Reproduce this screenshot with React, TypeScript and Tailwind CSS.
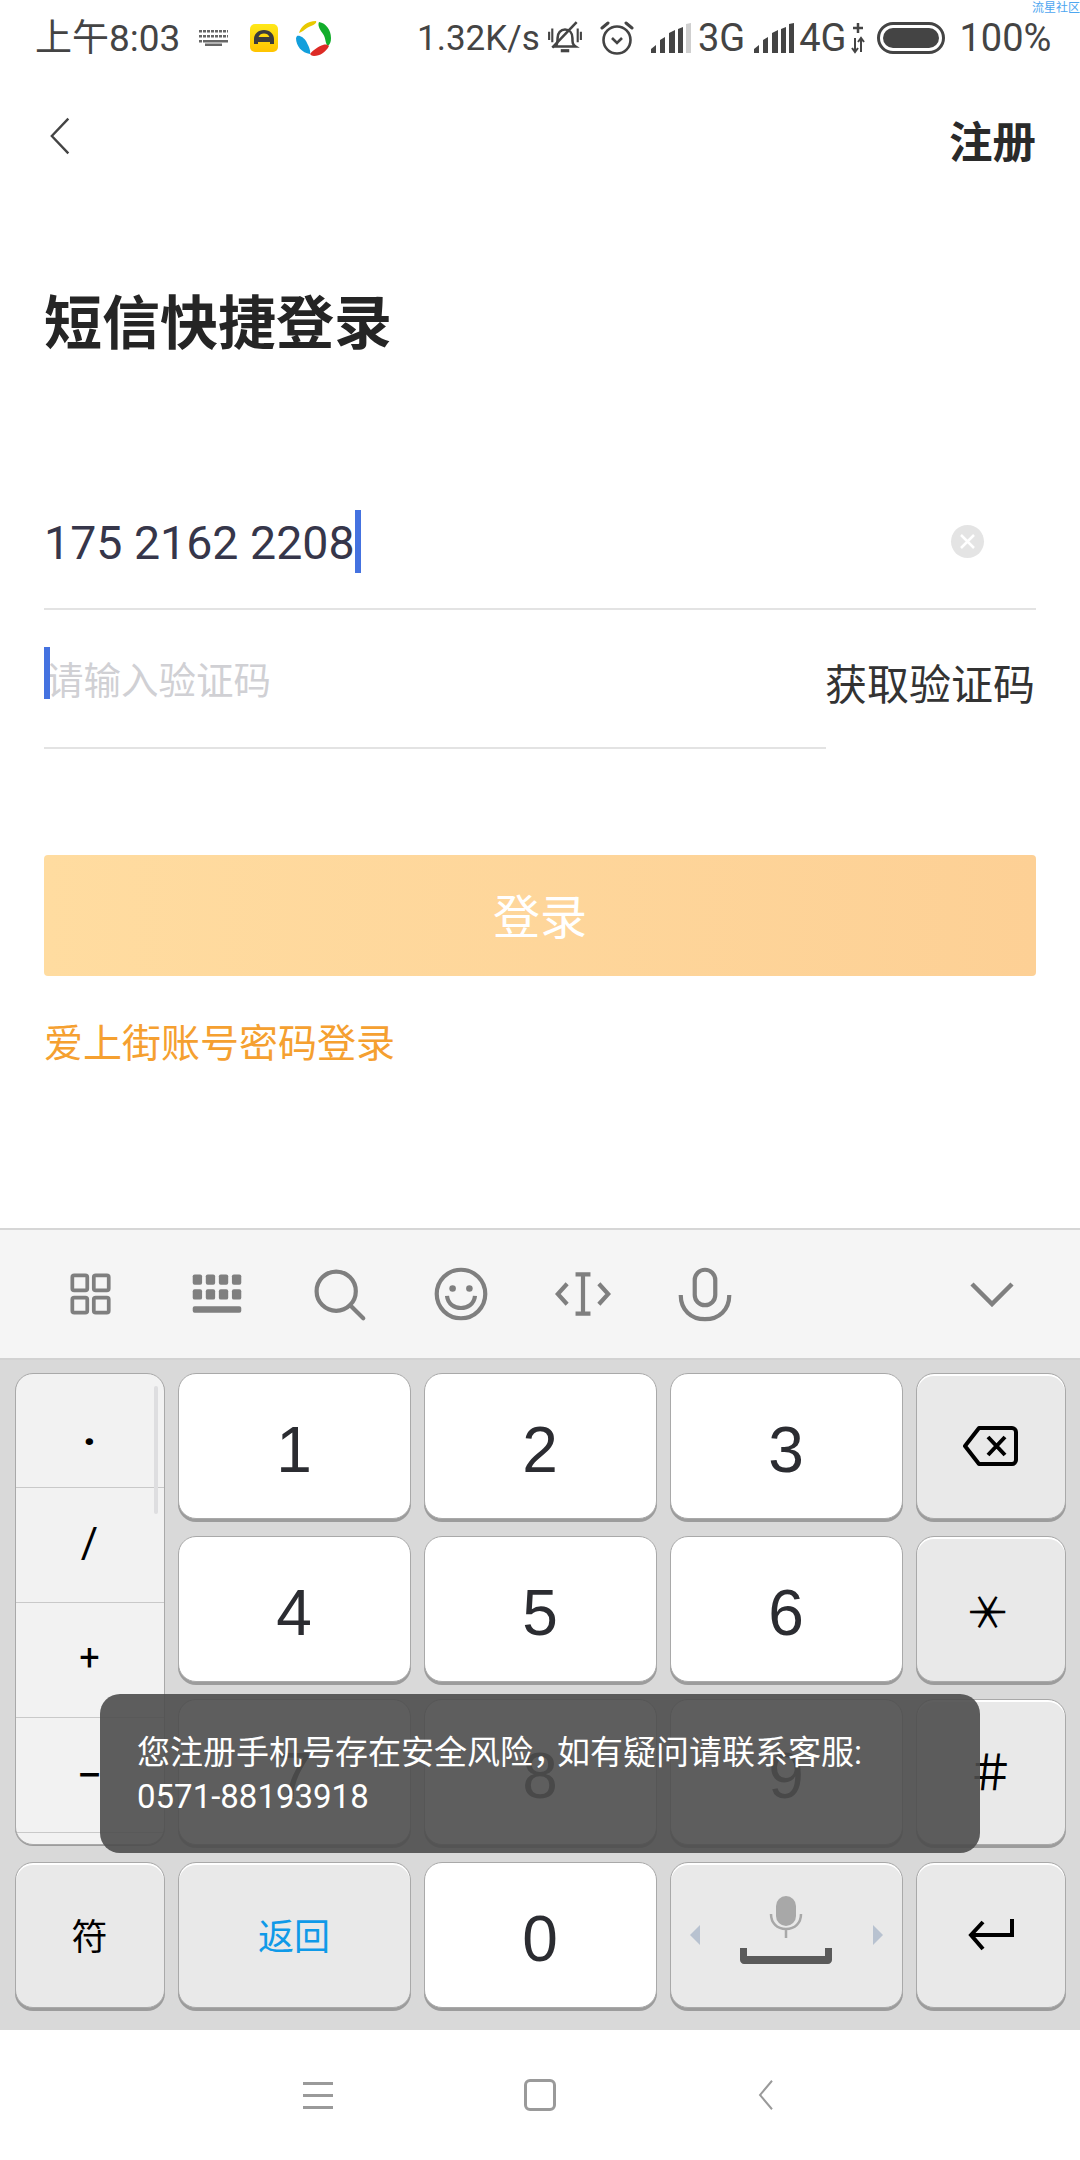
import React from "react";

const Chevron = ({ className, d }: { className: string; d: string }) => (
  <svg className={className} viewBox="0 0 24 40" fill="none" stroke="currentColor" strokeWidth="2.6">
    <path d={d} />
  </svg>
);

const ToolIcon = ({ children }: { children: React.ReactNode }) => (
  <div className="w-[122px] h-full flex items-center justify-center text-[#7f7f7f]">
    <svg className="w-[56px] h-[56px]" viewBox="0 0 60 60" fill="none" stroke="currentColor" strokeWidth="4.5">
      {children}
    </svg>
  </div>
);

const keyBase = "flex items-center justify-center rounded-[18px] border border-[#a9a9a9]";
const whiteKey = `${keyBase} bg-white shadow-[0_3px_0_#9c9c9c] text-[64px] leading-none text-[#2b2c31] font-['Liberation_Sans',sans-serif] pt-[8px]`;
const grayKey = `${keyBase} bg-[#e9e9e9] shadow-[inset_0_2px_0_#ffffff,0_3px_0_#9c9c9c] leading-none`;

export default function App() {
  return (
    <div className="relative w-[1080px] h-[2160px] bg-white flex flex-col overflow-hidden font-['Roboto','Noto_Sans_CJK_SC',sans-serif]">
      <div className="absolute right-0 top-0 text-[12px] leading-[14px] text-[#4da6f0] font-['Noto_Sans_CJK_SC',sans-serif]">流星社区</div>

      {/* status bar */}
      <div className="h-[76px] flex items-center pl-[35px] text-[#444444] leading-none shrink-0">
        <span className="text-[37px] w-[150px] whitespace-nowrap">上午8:03</span>
        <svg className="w-[30px] h-[16px] ml-[14px]" viewBox="0 0 30 16" fill="#666666">
          <path d="M0 0h29v2.500H0zM0 5h29v2.500H0zM0 10h29v2.500H0z" />
          <path d="M6 13.500h17V16H6z" />
          <path d="M3 0h1v13H3zM7 0h1v10H7zM11 0h1v10h-1zM15 0h1v10h-1zM19 0h1v10h-1zM23 0h1v10h-1zM27 0h1v10h-1z" fill="#ffffff" />
        </svg>
        <svg className="w-[28px] h-[28px] ml-[21px]" viewBox="0 0 28 28">
          <defs>
            <linearGradient id="yg" x1="0" y1="0" x2="0" y2="1">
              <stop offset="0" stopColor="#ffe818" />
              <stop offset="1" stopColor="#ffc400" />
            </linearGradient>
          </defs>
          <rect width="28" height="28" rx="5" fill="url(#yg)" />
          <path d="M4 20v-5c0-5 4-9 10-9s10 4 10 9v5h-4v-2H8v2z M8.500 13h11c-1-2.500-3-3.500-5.500-3.500S9.500 10.500 8.500 13z" fill="#3c3c3c" fillRule="evenodd" />
        </svg>
        <svg className="w-[36px] h-[36px] ml-[18px]" viewBox="0 0 36 36">
          <path d="M3 13C5 6 11 1 20 1c2 3-6 5-9 7-3 2-5 4-8 5z" fill="#e8c800" />
          <path d="M23 2c7 1 12 8 12 16 0 4-1 6-3 8-3-2-2-8-5-12-2-3-6-8-4-12z" fill="#12ad2b" />
          <path d="M14 34c3-4 9-8 13-9 3-1 5 0 6 1-3 6-9 10-15 10-2 0-3-1-4-2z" fill="#dd2a25" />
          <path d="M1 16c3-1 7 2 9 5 2 4 5 9 4 13C6 33 0 26 0 18z" fill="#129fdc" />
        </svg>
        <span className="text-[35px] ml-[85px] w-[125px]">1.32K/s</span>
        <svg className="w-[36px] h-[36px] ml-[5px]" viewBox="0 0 34 34" fill="none" stroke="#444444" strokeWidth="2.400">
          <path d="M8 25c2-2 2-4 2-8 0-5 3-8 7-8s7 3 7 8c0 4 0 6 3 8z" />
          <path d="M13 29h8" strokeWidth="3" />
          <path d="M5 26L28 2" />
          <path d="M2 11v8M5 8v13M29 8v13M32 11v8" strokeWidth="2" />
        </svg>
        <svg className="w-[34px] h-[36px] ml-[17px]" viewBox="0 0 34 36" fill="none" stroke="#444444" strokeWidth="2.600">
          <circle cx="17" cy="20" r="13.500" />
          <path d="M12 18l5 5 5-5" />
          <path d="M2 8l6-5M32 8l-6-5" strokeWidth="3" strokeLinecap="round" />
        </svg>
        <svg className="w-[40px] h-[30px] ml-[17px]" viewBox="0 0 40 30" fill="#444444">
          <path d="M0 30v-4l5-4v8zM9 30V17l5-3v16zM18 30V10l6-3v23zM27 30V6l5-2v26z" />
          <path d="M35 30V1l5-1v30z" fill="#cfcfcf" />
        </svg>
        <span className="text-[38px] ml-[7px]">3G</span>
        <svg className="w-[40px] h-[30px] ml-[9px]" viewBox="0 0 40 30" fill="#444444">
          <path d="M0 30v-4l5-4v8zM9 30V17l5-3v16zM18 30V10l6-3v23zM27 30V6l5-2v26zM35 30V1l5-1v30z" />
        </svg>
        <span className="text-[38px] ml-[5px]">4G</span>
        <svg className="w-[14px] h-[36px] ml-[4px]" viewBox="0 0 14 36" fill="none" stroke="#444444" strokeWidth="2">
          <path d="M7 3v10M2 8h10" strokeWidth="2.500" />
          <path d="M4 18v14M1 28l3 4 3-4M10 32V18M7 22l3-4 3 4" />
        </svg>
        <div className="w-[68px] h-[32px] ml-[12px] rounded-full border-[3px] border-[#444444] p-[3px]">
          <div className="w-full h-full rounded-full bg-[#444444]" />
        </div>
        <span className="text-[38px] ml-[15px]">100%</span>
      </div>

      {/* header */}
      <div className="h-[72px] mt-[28px] pl-[50px] pr-[44px] flex items-center justify-between shrink-0">
        <Chevron className="w-[22px] h-[40px] text-[#444444] -mt-[8px]" d="M20 1L2 20l18 19" />
        <span className="text-[43.500px] font-bold text-[#2a2a2a] leading-none mt-[8px]">注册</span>
      </div>

      <div className="h-[80px] mt-[108px] pl-[44px] flex items-center text-[58px] font-bold text-[#252525] leading-none shrink-0">短信快捷登录</div>

      {/* phone */}
      <div className="h-[112px] mt-[134px] mx-[44px] flex items-center border-b-2 border-[#e3e3e3] shrink-0">
        <span className="text-[46.500px] text-[#36364a] leading-none -mt-[20px]">175 2162 2208</span>
        <div className="w-[6px] h-[63px] bg-[#4472e0] -mt-[24px]" />
        <div className="ml-auto mr-[52px] -mt-[24px] w-[33px] h-[33px] rounded-full bg-[#e4e4e4] flex items-center justify-center">
          <svg className="w-[17px] h-[17px]" viewBox="0 0 17 17" stroke="#ffffff" strokeWidth="2.500"><path d="M2 2l13 13M15 2L2 15" /></svg>
        </div>
      </div>

      {/* code */}
      <div className="h-[139px] mx-[44px] flex shrink-0">
        <div className="relative w-[782px] flex items-center border-b-2 border-[#e3e3e3]">
          <div className="absolute left-0 top-[37px] w-[6px] h-[52px] bg-[#4472e0]" />
          <span className="text-[37.500px] text-[#d0d0d4] leading-none ml-[2px] mt-[6px]">请输入验证码</span>
        </div>
        <span className="text-[42px] text-[#333333] leading-none flex items-center mt-[12px] ml-[-1px] whitespace-nowrap">获取验证码</span>
      </div>

      <div className="h-[121px] mt-[106px] mx-[44px] rounded-[4px] bg-gradient-to-r from-[#ffdca0] to-[#fdd095] flex items-center justify-center text-white text-[47px] leading-none pt-[4px] shrink-0">登录</div>

      <div className="mt-[49px] ml-[44px] text-[39px] leading-none text-[#f5a030] shrink-0">爱上街账号密码登录</div>

      <div className="flex-1" />

      {/* toolbar */}
      <div className="h-[132px] bg-[#f5f5f5] border-t-2 border-b-2 border-t-[#d6d6d6] border-b-[#d2d2d2] flex items-center pl-[30px] pr-[58px] shrink-0">
        <div className="flex h-full">
          <ToolIcon>
            <g strokeWidth="4">
              <rect x="10" y="10" width="16" height="16" rx="2" />
              <rect x="33" y="10" width="16" height="16" rx="2" />
              <rect x="10" y="34" width="16" height="16" rx="2" />
              <rect x="33" y="34" width="16" height="16" rx="2" />
            </g>
          </ToolIcon>
          <div className="w-[4px]" />
          <ToolIcon>
            <g fill="#7f7f7f" stroke="none">
              <rect x="4" y="9" width="10" height="11" rx="2" /><rect x="18" y="9" width="10" height="11" rx="2" /><rect x="32" y="9" width="10" height="11" rx="2" /><rect x="46" y="9" width="10" height="11" rx="2" />
              <rect x="4" y="25" width="10" height="11" rx="2" /><rect x="18" y="25" width="10" height="11" rx="2" /><rect x="32" y="25" width="10" height="11" rx="2" /><rect x="46" y="25" width="10" height="11" rx="2" />
              <rect x="4" y="43" width="52" height="7" rx="2" />
            </g>
          </ToolIcon>
          <ToolIcon>
            <circle cx="27" cy="27" r="21" />
            <path d="M42 42l14 14" strokeLinecap="round" />
          </ToolIcon>
          <ToolIcon>
            <circle cx="30" cy="30" r="26" />
            <circle cx="21" cy="24" r="3.500" fill="#7f7f7f" stroke="none" />
            <circle cx="39" cy="24" r="3.500" fill="#7f7f7f" stroke="none" />
            <path d="M15 32c1 9 8 13 15 13s14-4 15-13" />
          </ToolIcon>
          <ToolIcon>
            <path d="M22 9h16M30 9v42M22 51h16" />
            <path d="M13 19L3 30l10 11M47 19l10 11-10 11" />
          </ToolIcon>
          <ToolIcon>
            <rect x="19" y="4" width="22" height="38" rx="11" />
            <path d="M4 31c0 16 11 26 26 26s26-10 26-26" />
          </ToolIcon>
        </div>
        <div className="ml-auto w-[60px] flex items-center justify-center">
          <svg className="w-[44px] h-[26px]" viewBox="0 0 44 26" fill="none" stroke="#7f7f7f" strokeWidth="4.500"><path d="M2 3l20 20L42 3" /></svg>
        </div>
      </div>

      {/* keyboard */}
      <div className="relative h-[670px] bg-[#d9d9d9] pl-[14.500px] pr-[14.500px] pt-[13px] shrink-0 grid grid-cols-[150px_233px_233px_233px_150px] grid-rows-[146px_146px_146px_146px] gap-x-[13px] gap-y-[17px] content-start">
        <div className="row-span-3 relative overflow-hidden rounded-[18px] border border-[#a9a9a9] bg-[#f2f2f2] shadow-[0_1px_0_#9c9c9c] text-black flex flex-col">
          <div className="h-[114px] shrink-0 border-b border-[#c9c9c9] flex items-center justify-center text-[46px] font-bold leading-none pt-[20px]">·</div>
          <div className="h-[115px] shrink-0 border-b border-[#c9c9c9] flex items-center justify-center text-[42px] leading-none pb-[4px]">/</div>
          <div className="h-[115px] shrink-0 border-b border-[#c9c9c9] flex items-center justify-center text-[36px] leading-none pb-[4px]">+</div>
          <div className="h-[115px] shrink-0 border-b border-[#c9c9c9] flex items-center justify-center text-[46px] leading-none">−</div>
          <div className="absolute right-[6px] top-[12px] w-[4px] h-[128px] rounded-full bg-[#dedee0]" />
        </div>
        <div className={whiteKey}>1</div>
        <div className={whiteKey}>2</div>
        <div className={whiteKey}>3</div>
        <div className={`${grayKey} text-black`}>
          <svg className="w-[56px] h-[42px]" viewBox="0 0 56 42" fill="none" stroke="#000000" strokeWidth="4" strokeLinejoin="round">
            <path d="M16 3h33c2 0 4 2 4 4v28c0 2-2 4-4 4H16L2 21z" />
            <path d="M25 12l17 18M42 12L25 30" strokeWidth="4" />
          </svg>
        </div>
        <div className={whiteKey}>4</div>
        <div className={whiteKey}>5</div>
        <div className={whiteKey}>6</div>
        <div className={`${grayKey} text-black text-[46px] font-normal pt-[6px] font-['Noto_Sans_CJK_SC',sans-serif]`}><span className="rotate-90 inline-block">＊</span></div>
        <div className={whiteKey}>7</div>
        <div className={whiteKey}>8</div>
        <div className={whiteKey}>9</div>
        <div className={`${grayKey} text-black text-[48px] font-normal pb-[6px] font-['Noto_Sans_CJK_SC',sans-serif]`}>＃</div>
        <div className={`${grayKey} text-black text-[36px] pt-[6px]`}>符</div>
        <div className={`${grayKey} text-[#0f9ae8] text-[36px] pt-[6px]`}>返回</div>
        <div className={whiteKey}>0</div>
        <div className={grayKey}>
          <div className="w-full flex items-center justify-between px-[18px]">
            <svg className="w-[12px] h-[20px]" viewBox="0 0 12 20" fill="#b8c2d0"><path d="M11 0v20L1 10z" /></svg>
            <svg className="w-[94px] h-[68px] -mt-[10px]" viewBox="0 0 94 68">
              <rect x="37" y="0" width="20" height="30" rx="10" fill="#a8a8a8" />
              <path d="M32 18c0 9 6 15 15 15s15-6 15-15M47 33v9" fill="none" stroke="#a8a8a8" strokeWidth="2.500" />
              <path d="M1 52h7v8h78v-8h7v12c0 2-2 4-4 4H5c-2 0-4-2-4-4z" fill="#5a5a5a" />
            </svg>
            <svg className="w-[12px] h-[20px]" viewBox="0 0 12 20" fill="#b8c2d0"><path d="M1 0v20L11 10z" /></svg>
          </div>
        </div>
        <div className={grayKey}>
          <svg className="w-[46px] h-[32px]" viewBox="0 0 46 32" fill="none" stroke="#000000" strokeWidth="4">
            <path d="M44 0v16H4M15 3L3 16l12 14" />
          </svg>
        </div>

        {/* toast */}
        <div className="absolute left-[100px] top-[334px] w-[880px] h-[159px] rounded-[20px] bg-[#4d4d4d]/90 pl-[37px] pt-[37px] text-[33px] leading-[44px] text-white whitespace-nowrap">
          <div>您注册手机号存在安全风险<span className="inline-block w-[24px]">，</span>如有疑问请联系客服:</div>
          <div>0571-88193918</div>
        </div>
      </div>

      {/* nav bar */}
      <div className="h-[130px] flex items-center justify-center shrink-0">
        <div className="w-[222px] flex justify-center">
          <div className="w-[30px] flex flex-col gap-[9px]">
            <div className="h-[3px] bg-[#9a9a9a]" /><div className="h-[3px] bg-[#9a9a9a]" /><div className="h-[3px] bg-[#9a9a9a]" />
          </div>
        </div>
        <div className="w-[222px] flex justify-center">
          <div className="w-[32px] h-[32px] rounded-[6px] border-[3px] border-[#9a9a9a]" />
        </div>
        <div className="w-[222px] flex justify-center pl-[8px]">
          <Chevron className="w-[18px] h-[32px] text-[#9a9a9a]" d="M20 1L4 20l16 19" />
        </div>
      </div>
    </div>
  );
}
